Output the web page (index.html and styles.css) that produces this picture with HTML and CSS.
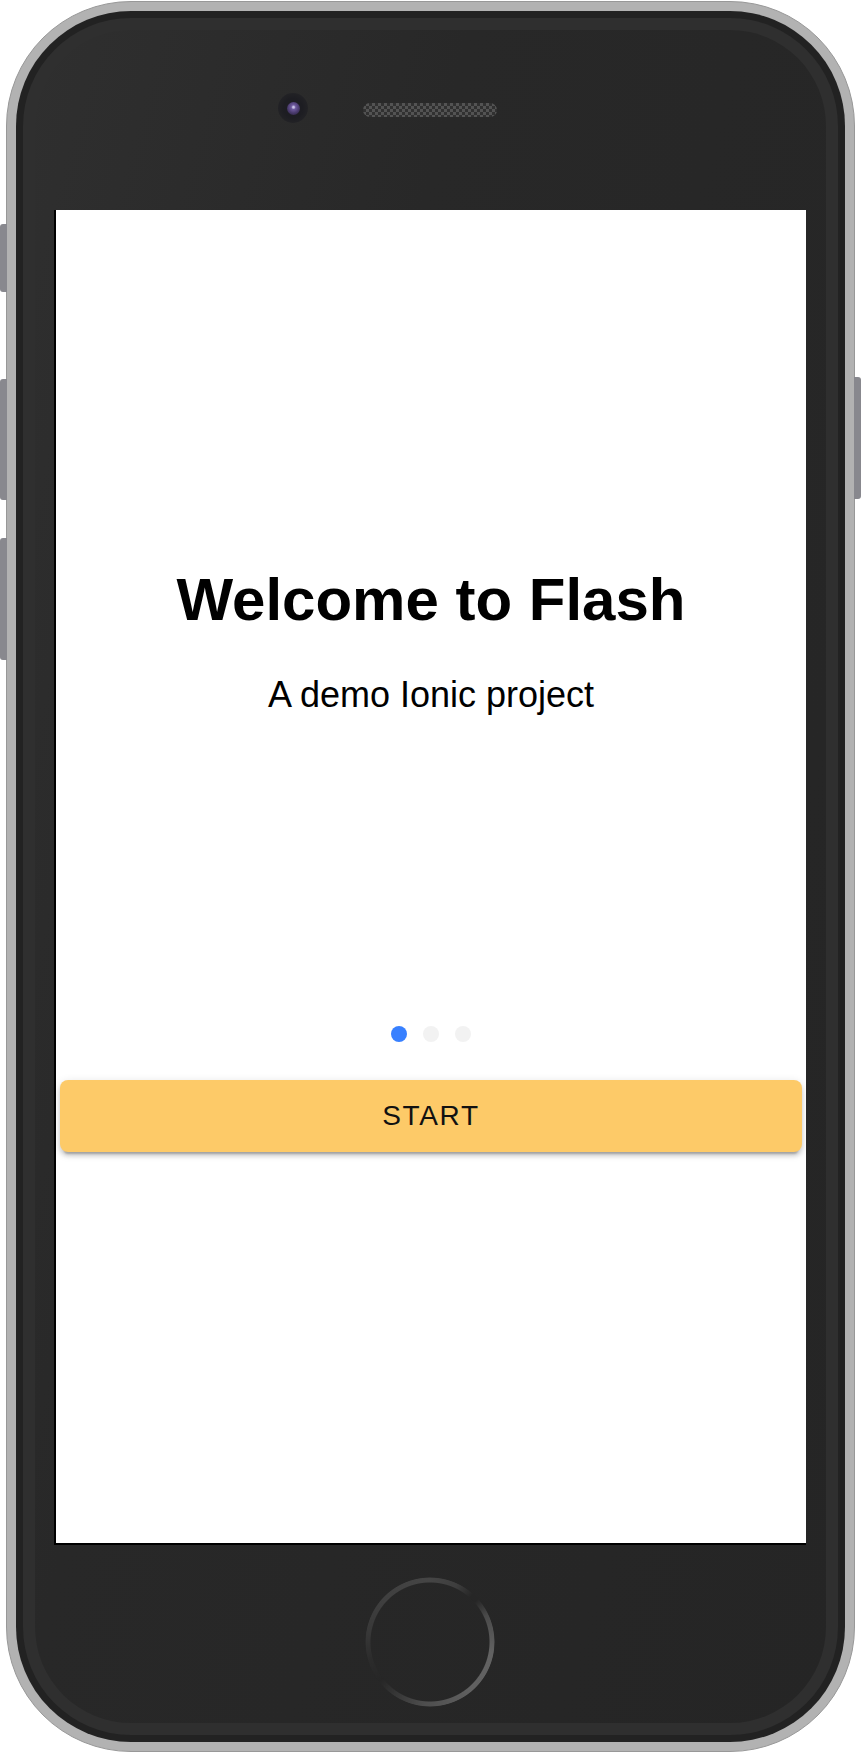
FILE: index.html
```html
<!DOCTYPE html>
<html lang="en">
<head>
<meta charset="utf-8">
<title>Flash</title>
<link rel="stylesheet" href="styles.css">
</head>
<body>
<div class="device">
  <span class="side-btn side-left btn-mute"></span>
  <span class="side-btn side-left btn-vol-up"></span>
  <span class="side-btn side-left btn-vol-down"></span>
  <span class="side-btn side-right btn-power"></span>
  <div class="shell">
    <div class="rim">
      <div class="face">
        <div class="top-bar">
          <div class="camera"><div class="lens"></div></div>
          <div class="speaker"></div>
          <div class="top-spacer"></div>
        </div>
        <div class="screen">
          <div class="slide">
            <h1 class="title">Welcome to Flash</h1>
            <p class="subtitle">A demo Ionic project</p>
          </div>
          <div class="dots">
            <span class="dot active"></span>
            <span class="dot"></span>
            <span class="dot"></span>
          </div>
          <button class="start-btn">START</button>
        </div>
        <div class="bottom-bar">
          <div class="home-btn"></div>
        </div>
      </div>
    </div>
  </div>
</div>
</body>
</html>
```
FILE: styles.css
```css
* { box-sizing: border-box; }
html, body { margin: 0; padding: 0; background: #fff; }
body { font-family: "Liberation Sans", Arial, sans-serif; }

.device {
  position: relative;
  margin: 1px 0 0 6px;
  width: 849px;
  height: 1751px;
  border-radius: 125px;
  background: #b2b2b2;
  border: 1px solid #989898;
  padding: 9px;
}

.side-btn {
  position: absolute;
  width: 7px;
  background: #88888e;
}
.side-left { left: -7px; border-radius: 3px 0 0 3px; }
.side-right { right: -7px; border-radius: 0 3px 3px 0; }
.btn-mute { top: 222px; height: 68px; }
.btn-vol-up { top: 377px; height: 121px; }
.btn-vol-down { top: 536px; height: 122px; }
.btn-power { top: 375px; height: 122px; }

.shell {
  height: 100%;
  border-radius: 115px;
  background: #222;
  padding: 7px;
}
.rim {
  height: 100%;
  border-radius: 108px;
  background: #2f2f2f;
  padding: 12px;
}
.face {
  height: 100%;
  border-radius: 96px;
  background: linear-gradient(105deg, #2f2f2f 0%, #282828 35%, #252525 100%);
  padding: 0 20px 0 19px;
  display: flex;
  flex-direction: column;
}

.top-bar {
  height: 180px;
  display: grid;
  grid-template-columns: 1fr auto 1fr;
  align-items: start;
}
.camera {
  justify-self: end;
  margin: 63px 55px 0 0;
  width: 30px;
  height: 30px;
  border-radius: 50%;
  background: radial-gradient(circle, #1d1d22 45%, #232326 75%, #2a2a2a 100%);
  display: flex;
  align-items: center;
  justify-content: center;
}
.lens {
  width: 13px;
  height: 13px;
  border-radius: 50%;
  background: radial-gradient(circle at 50% 40%, #c9c2e6 0 8%, #6e5a9e 22%, #4a3b6e 55%, #241d33 100%);
}
.speaker {
  margin-top: 73px;
  width: 134px;
  height: 14px;
  border-radius: 7px;
  background: repeating-conic-gradient(#585858 0 25%, #323232 0 50%) 0 0 / 6px 6px;
  opacity: 0.9;
}

.screen {
  height: 1335px;
  background: #fff;
  border-left: 2px solid #000;
  border-bottom: 2px solid #000;
  display: flex;
  flex-direction: column;
  align-items: center;
  padding-top: 354px;
}
.slide { text-align: center; }
.title {
  margin: 0;
  font-size: 60px;
  line-height: 72px;
  font-weight: 700;
  color: #000;
}
.subtitle {
  margin: 37px 0 0;
  font-size: 36px;
  line-height: 43px;
  color: #000;
}
.dots {
  margin-top: 310px;
  display: flex;
  gap: 16px;
}
.dot {
  width: 16px;
  height: 16px;
  border-radius: 50%;
  background: #f2f2f2;
}
.dot.active { background: #3880ff; }

.start-btn {
  margin: 38px 4px 0 4px;
  align-self: stretch;
  height: 72px;
  border: 0;
  border-radius: 8px;
  background: #fdca68;
  color: #111;
  font-family: "Liberation Sans", Arial, sans-serif;
  font-size: 28px;
  letter-spacing: 1.7px;
  box-shadow: 0 6px 2px -4px rgba(0,0,0,.2), 0 4px 4px 0 rgba(0,0,0,.14), 0 2px 10px 0 rgba(0,0,0,.12);
}

.bottom-bar {
  flex: 1;
  display: flex;
  justify-content: center;
  padding-top: 32px;
}
.home-btn {
  width: 130px;
  height: 130px;
  border-radius: 50%;
  background: conic-gradient(
    #454545 0deg, #3e3e3e 25deg, #262626 42deg, #262626 48deg,
    #4a4a4a 65deg, #626262 100deg, #606060 140deg, #4e4e4e 185deg,
    #353535 215deg, #262626 232deg, #2c2c2c 255deg, #383838 280deg,
    #3f3f3f 310deg, #454545 360deg);
  -webkit-mask: radial-gradient(circle, transparent 59px, #000 60px, #000 64px, transparent 65px);
  mask: radial-gradient(circle, transparent 59px, #000 60px, #000 64px, transparent 65px);
}
```
